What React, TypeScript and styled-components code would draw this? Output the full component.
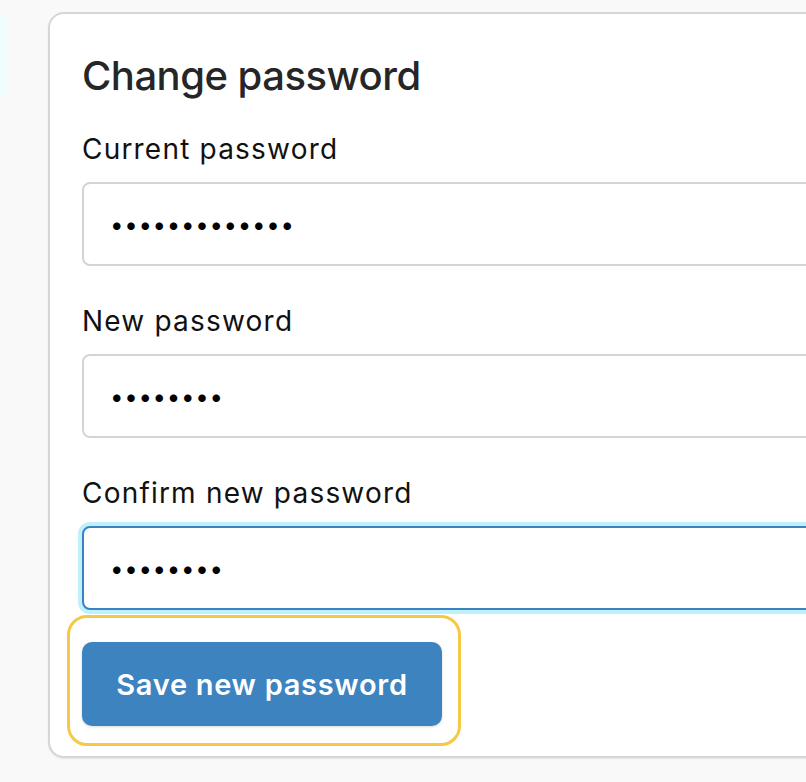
import styled, { createGlobalStyle } from 'styled-components';

const GlobalStyle = createGlobalStyle`
	html, body {
		margin: 0;
		padding: 0;
		background: #f9f9f9;
		overflow: hidden;
		font-family: Inter, "Noto Sans", sans-serif;
	}
`;

const Page = styled.div`
	display: flex;
	align-items: flex-start;
	gap: 40px;
	padding-top: 12px;
	height: 782px;
	box-sizing: border-box;
`;

const SideCard = styled.div`
	flex: 0 0 8px;
	height: 82px;
	margin-top: 1px;
	background: #f0fdff;
	border-radius: 0 8px 8px 0;
`;

const Card = styled.form`
	flex: 0 0 900px;
	box-sizing: border-box;
	height: 746px;
	background: #ffffff;
	border: 2px solid #d5d6db;
	border-radius: 16px;
	box-shadow: 0 1px 2px rgba(0, 0, 0, 0.08);
	padding: 37px 32px 10px;
	display: flex;
	flex-direction: column;
	align-items: flex-start;
`;

const Title = styled.h2`
	margin: 0 0 31px;
	font-size: 40px;
	line-height: 50px;
	font-weight: 500;
	letter-spacing: -0.5px;
	color: #262626;
`;

const Field = styled.div<{ $first?: boolean }>`
	display: flex;
	flex-direction: column;
	width: 100%;
	margin-top: ${(p) => (p.$first ? '0' : '38px')};
`;

const Label = styled.label`
	font-size: 28px;
	line-height: 34px;
	letter-spacing: 1.2px;
	color: #111111;
	margin-bottom: 16px;
`;

const Input = styled.input<{ $focused?: boolean }>`
	box-sizing: border-box;
	width: 100%;
	height: 84px;
	padding: 0 26px;
	border: 2px solid ${(p) => (p.$focused ? '#3a82c3' : '#d4d4d8')};
	border-radius: 8px;
	box-shadow: ${(p) => (p.$focused ? '0 0 0 4px #bff1fa' : 'none')};
	background: #ffffff;
	font-family: Inter, sans-serif;
	font-size: 24px;
	letter-spacing: 0.7px;
	color: #000000;
	outline: none;
`;

const FocusFrame = styled.div`
	margin: 5px 0 0 -15px;
	padding: 24px 16px 17px 12px;
	border: 3px solid #f6c945;
	border-radius: 20px;
`;

const SaveButton = styled.button`
	display: block;
	width: 360px;
	height: 84px;
	border: none;
	border-radius: 10px;
	background: #3d83c0;
	box-shadow: 0 1px 3px rgba(0, 0, 0, 0.15);
	color: #ffffff;
	font-family: Inter, sans-serif;
	font-size: 29px;
	font-weight: 600;
	letter-spacing: 0.7px;
	cursor: pointer;
`;

const fields = [
	{ id: 'current', label: 'Current password', value: 'aaaaaaaaaaaaa' },
	{ id: 'new', label: 'New password', value: 'aaaaaaaa' },
	{ id: 'confirm', label: 'Confirm new password', value: 'aaaaaaaa', focused: true },
];

function App() {
	return (
		<>
			<GlobalStyle />
			<Page>
				<SideCard />
				<Card onSubmit={(e) => e.preventDefault()}>
					<Title>Change password</Title>
					{fields.map((f, i) => (
						<Field key={f.id} $first={i === 0}>
							<Label htmlFor={f.id}>{f.label}</Label>
							<Input id={f.id} type="password" defaultValue={f.value} readOnly $focused={f.focused} />
						</Field>
					))}
					<FocusFrame>
						<SaveButton type="submit">Save new password</SaveButton>
					</FocusFrame>
				</Card>
			</Page>
		</>
	);
}

export default App;
